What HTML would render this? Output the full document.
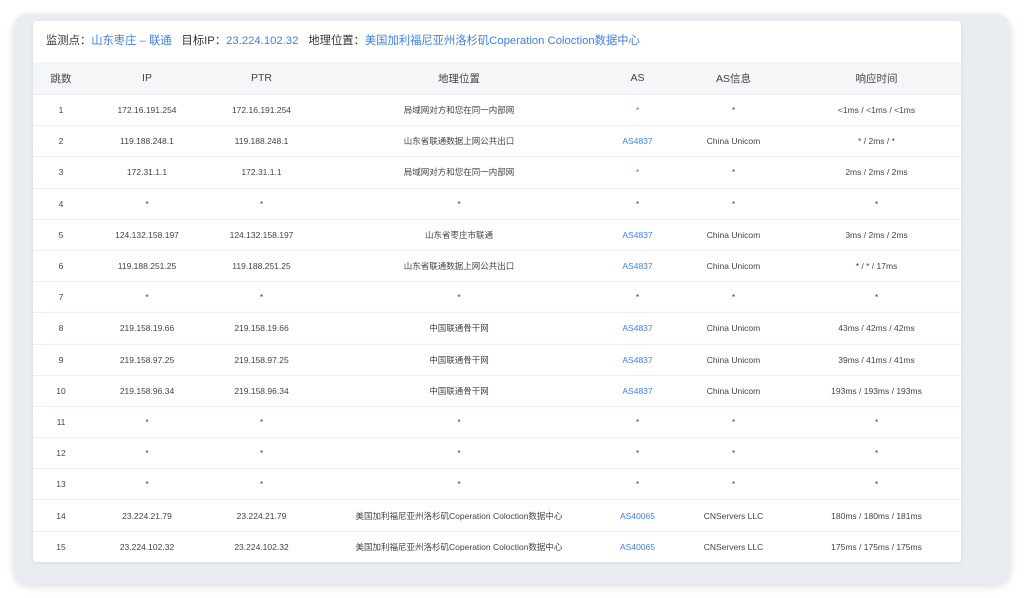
<!DOCTYPE html>
<html><head><meta charset="utf-8"><style>
body{margin:0;width:1024px;height:598px;background:#fff;font-family:"Liberation Sans","Noto Sans CJK SC",sans-serif;overflow:hidden;position:relative}
.outer{position:absolute;left:14px;top:14px;width:996px;height:570px;background:#e9ecf1;border-radius:14px;box-shadow:0 2px 8px rgba(0,0,0,.15)}
.card{position:absolute;left:33px;top:21px;width:928px;height:541px;background:#fff;border-radius:3px;box-shadow:0 1px 4px rgba(0,0,0,.08)}
.hd{height:41px;line-height:41px;padding-left:13px;font-size:11.3px;color:#333;white-space:nowrap}
.hd span{color:#3f7ff0}
.hd i{font-style:normal;display:inline-block;width:10px}
table{border-collapse:collapse;width:928px;table-layout:fixed}
th{height:32px;background:#f5f6f8;font-weight:normal;font-size:10.5px;color:#444;padding:0}
td{height:30.2px;border-top:1px solid #edf0f3;font-size:8.5px;color:#444;text-align:center;padding:0;white-space:nowrap}
td.b{color:#3f7ff0}
</style></head><body>
<div class="outer"></div>
<div class="card">
<div class="hd">监测点：<span>山东枣庄 – 联通</span><i></i>目标IP：<span>23.224.102.32</span><i></i>地理位置：<span>美国加利福尼亚州洛杉矶Coperation Coloction数据中心</span></div>
<table>
<colgroup><col style="width:56px"><col style="width:116px"><col style="width:113px"><col style="width:282px"><col style="width:75px"><col style="width:117px"><col style="width:169px"></colgroup>
<tr><th>跳数</th><th>IP</th><th>PTR</th><th>地理位置</th><th>AS</th><th>AS信息</th><th>响应时间</th></tr>
<tr><td>1</td><td>172.16.191.254</td><td>172.16.191.254</td><td>局域网对方和您在同一内部网</td><td class="b">*</td><td>*</td><td>&lt;1ms / &lt;1ms / &lt;1ms</td></tr>
<tr><td>2</td><td>119.188.248.1</td><td>119.188.248.1</td><td>山东省联通数据上网公共出口</td><td class="b">AS4837</td><td>China Unicom</td><td>* / 2ms / *</td></tr>
<tr><td>3</td><td>172.31.1.1</td><td>172.31.1.1</td><td>局域网对方和您在同一内部网</td><td class="b">*</td><td>*</td><td>2ms / 2ms / 2ms</td></tr>
<tr><td>4</td><td>*</td><td>*</td><td>*</td><td>*</td><td>*</td><td>*</td></tr>
<tr><td>5</td><td>124.132.158.197</td><td>124.132.158.197</td><td>山东省枣庄市联通</td><td class="b">AS4837</td><td>China Unicom</td><td>3ms / 2ms / 2ms</td></tr>
<tr><td>6</td><td>119.188.251.25</td><td>119.188.251.25</td><td>山东省联通数据上网公共出口</td><td class="b">AS4837</td><td>China Unicom</td><td>* / * / 17ms</td></tr>
<tr><td>7</td><td>*</td><td>*</td><td>*</td><td>*</td><td>*</td><td>*</td></tr>
<tr><td>8</td><td>219.158.19.66</td><td>219.158.19.66</td><td>中国联通骨干网</td><td class="b">AS4837</td><td>China Unicom</td><td>43ms / 42ms / 42ms</td></tr>
<tr><td>9</td><td>219.158.97.25</td><td>219.158.97.25</td><td>中国联通骨干网</td><td class="b">AS4837</td><td>China Unicom</td><td>39ms / 41ms / 41ms</td></tr>
<tr><td>10</td><td>219.158.96.34</td><td>219.158.96.34</td><td>中国联通骨干网</td><td class="b">AS4837</td><td>China Unicom</td><td>193ms / 193ms / 193ms</td></tr>
<tr><td>11</td><td>*</td><td>*</td><td>*</td><td>*</td><td>*</td><td>*</td></tr>
<tr><td>12</td><td>*</td><td>*</td><td>*</td><td>*</td><td>*</td><td>*</td></tr>
<tr><td>13</td><td>*</td><td>*</td><td>*</td><td>*</td><td>*</td><td>*</td></tr>
<tr><td>14</td><td>23.224.21.79</td><td>23.224.21.79</td><td>美国加利福尼亚州洛杉矶Coperation Coloction数据中心</td><td class="b">AS40065</td><td>CNServers LLC</td><td>180ms / 180ms / 181ms</td></tr>
<tr><td>15</td><td>23.224.102.32</td><td>23.224.102.32</td><td>美国加利福尼亚州洛杉矶Coperation Coloction数据中心</td><td class="b">AS40065</td><td>CNServers LLC</td><td>175ms / 175ms / 175ms</td></tr>
</table>
</div>
</body></html>
